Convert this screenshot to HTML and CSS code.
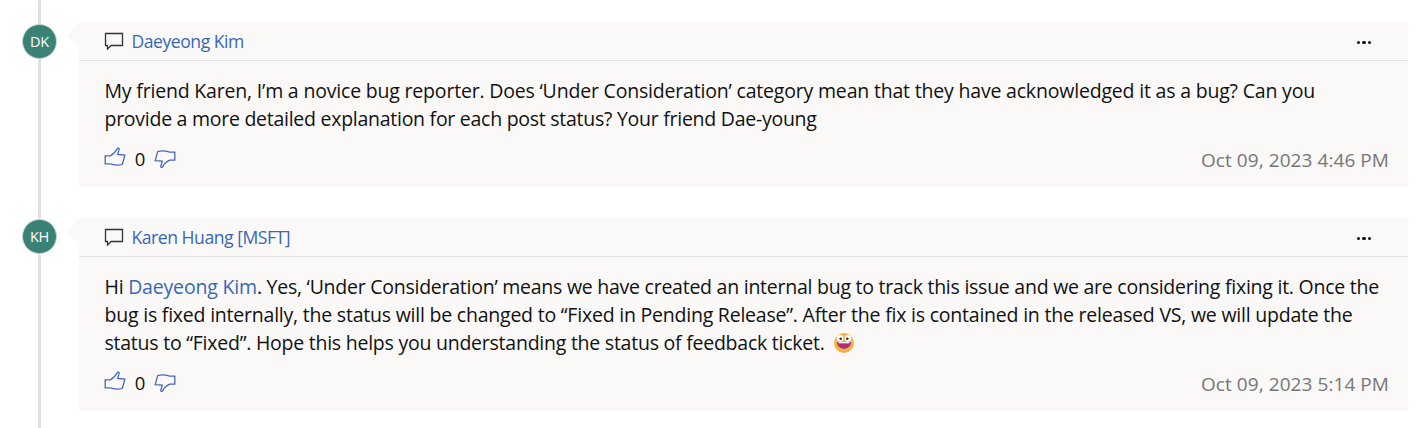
FILE: index.html
```html
<!DOCTYPE html>
<html lang="en">
<head>
<meta charset="utf-8">
<title>Comments</title>
<link rel="stylesheet" href="styles.css">
</head>
<body>
<svg class="symbols" aria-hidden="true">
  <symbol id="bubble" viewBox="0 0 20 18"><path d="M1.5 1.5H18.5V13.5H7.2L3.5 17V13.5H1.5Z"/></symbol>
  <symbol id="up" viewBox="0 0 22 20"><path d="M1.2 8.8H6.2C9 7.5 11.8 4.8 13.2 1.8C13.7 .8 15.5 1 15.2 2.2L13.6 7.4L20.8 8.1L18.4 17.2C15.5 18.8 9 17.7 6.2 16.8H1.2Z"/></symbol>
  <symbol id="down" viewBox="0 0 22 20"><path d="M20.8 11.2H15.8C13 12.5 10.2 14.5 8.8 17.5C8.3 18.7 6.5 18.5 6.8 17.3L8.2 12.2L1.2 11.7L3.6 2.8C6.5 1.2 13 2.3 15.8 3.2H20.8Z"/></symbol>
</svg>
<main class="thread">
  <article class="comment">
    <div class="rail"><span class="avatar">DK</span></div>
    <div class="card">
      <header class="head">
        <svg class="bubble"><use href="#bubble"/></svg>
        <a class="author">Daeyeong Kim</a>
        <span class="more"><i></i><i></i><i></i></span>
      </header>
      <div class="body">
        <p class="text">
          <span class="line a1">My friend Karen, I’m a novice bug reporter. Does ‘Under Consideration’ category mean that they have acknowledged it as a bug? Can you</span>
          <span class="line a2">provide a more detailed explanation for each post status? Your friend Dae-young</span>
        </p>
        <footer class="foot">
          <svg class="thumb"><use href="#up"/></svg><span class="count">0</span><svg class="thumb down"><use href="#down"/></svg>
          <time class="time">Oct 09, 2023 4:46 PM</time>
        </footer>
      </div>
    </div>
  </article>
  <article class="comment">
    <div class="rail"><span class="avatar">KH</span></div>
    <div class="card">
      <header class="head">
        <svg class="bubble"><use href="#bubble"/></svg>
        <a class="author">Karen Huang [MSFT]</a>
        <span class="more"><i></i><i></i><i></i></span>
      </header>
      <div class="body">
        <p class="text">
          <span class="line b1">Hi <a class="mention">Daeyeong Kim</a>. Yes, ‘Under Consideration’ means we have created an internal bug to track this issue and we are considering fixing it. Once the</span>
          <span class="line b2">bug is fixed internally, the status will be changed to “Fixed in Pending Release”. After the fix is contained in the released VS, we will update the</span>
          <span class="line b3">status to “Fixed”. Hope this helps you understanding the status of feedback ticket. <svg class="emoji" viewBox="0 0 20 20"><circle cx="10" cy="10" r="10" fill="#f5b04c"/><circle cx="6" cy="5.2" r="3.3" fill="#fff"/><circle cx="14" cy="5.2" r="3.3" fill="#fff"/><circle cx="6.7" cy="5.7" r="1.3" fill="#3b2b25"/><circle cx="13.3" cy="5.7" r="1.3" fill="#3b2b25"/><path d="M3 9H17C17 18 3 18 3 9Z" fill="#ad2f72"/><path d="M4.6 9H15.4V10.3H4.6Z" fill="#fff"/></svg></span>
        </p>
        <footer class="foot">
          <svg class="thumb"><use href="#up"/></svg><span class="count">0</span><svg class="thumb down"><use href="#down"/></svg>
          <time class="time">Oct 09, 2023 5:14 PM</time>
        </footer>
      </div>
    </div>
  </article>
</main>
</body>
</html>
```
FILE: styles.css
```css
* { box-sizing: border-box; }
body {
  margin: 0;
  height: 428px;
  overflow: hidden;
  background: #fff;
  color: #111;
  font: 19.5px/28px "Open Sans", "Noto Sans", sans-serif;
}
.symbols { display: block; width: 0; height: 0; }
.thread {
  height: 428px;
  padding: 22px 20px 0 0;
  display: flex;
  flex-direction: column;
  gap: 31px;
  background: linear-gradient(#e1e1e1, #e1e1e1) 38px 0 / 3px 100% no-repeat;
}
.comment { display: flex; }
.rail { width: 79px; flex: none; padding: 2px 0 0 22px; }
.avatar {
  display: flex;
  align-items: center;
  justify-content: center;
  width: 35px;
  height: 35px;
  border: 1px solid #c9d8d5;
  border-radius: 50%;
  background: #3b8276;
  color: #fff;
  font-size: 14.5px;
  line-height: 20px;
  letter-spacing: -0.3px;
}
.comment + .comment .avatar { margin-top: -1px; }
.card { position: relative; flex: 1; min-width: 0; background: #faf9f8; }
.card::before {
  content: "";
  position: absolute;
  left: -12px;
  top: 0;
  width: 12px;
  height: 26px;
  background: #faf9f8;
  clip-path: polygon(100% 0, 100% 100%, 0 54%);
}
.head {
  display: flex;
  align-items: center;
  height: 39px;
  padding: 0 36px 0 24.5px;
  border-bottom: 1px solid #e1e1e1;
}
.bubble { width: 20px; height: 18px; margin-right: 8px; fill: none; stroke: #333; stroke-width: 1.3; }
.author { font-size: 17.6px; color: #3867b7; white-space: nowrap; letter-spacing: -0.48px; }
.more { display: flex; gap: 2px; margin: 3px 1px 0 auto; }
.more i { width: 3.4px; height: 3.4px; border-radius: 50%; background: #111; }
.body { padding: 16px 19px 14px 25.5px; }
.text { margin: 0; }
.line { display: block; width: max-content; white-space: nowrap; }
.a1 { letter-spacing: -0.19px; }
.a2 { letter-spacing: -0.265px; }
.b1 { letter-spacing: -0.25px; }
.b2 { letter-spacing: -0.218px; }
.b3 { letter-spacing: -0.24px; }
.mention { color: #3867b7; letter-spacing: -0.18px; }
.emoji { width: 20px; height: 20px; margin-left: 5px; vertical-align: -3px; }
.foot { display: flex; align-items: center; height: 28px; margin-top: 12px; }
.thumb { width: 22px; height: 20px; margin: -4px 0 0 -1px; fill: none; stroke: #4569bb; stroke-width: 1.3; }
.down { margin-top: -1px; }
.count { width: 29px; text-align: center; font-size: 18.5px; }
.time { margin-left: auto; padding-top: 1px; color: #767676; font-size: 19px; letter-spacing: 0.07px; }
```
